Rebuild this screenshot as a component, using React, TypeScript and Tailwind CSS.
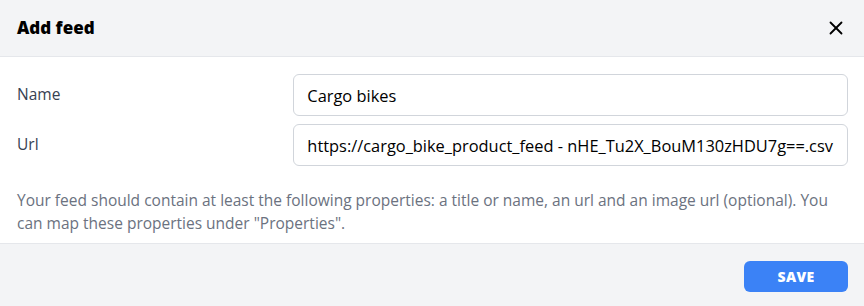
import React from "react";
import { X } from "lucide-react";

const App = () => {
  return (
    <div
      className="w-[864px] h-[306px] bg-white flex flex-col text-[#1f2937]"
      style={{ fontFamily: "'Open Sans', 'Noto Sans', sans-serif" }}
    >
      {/* Header */}
      <div className="h-[57px] bg-[#f3f4f6] border-b border-[#e5e7eb] flex items-center justify-between pl-[17px] pr-[17px]">
        <h2 className="text-[17px] font-extrabold text-black">Add feed</h2>
        <X className="w-[22px] h-[22px] text-black" strokeWidth={2} />
      </div>

      {/* Body */}
      <div className="flex-1 px-4 pt-[17px]">
        <div className="grid grid-cols-3 items-center gap-y-2">
          <label className="pl-px text-[15.5px] text-[#374151]">Name</label>
          <input
            className="col-span-2 h-[42px] rounded-md border border-[#d1d5db] px-[13px] text-[16.4px] text-black outline-none"
            defaultValue="Cargo bikes"
          />
          <label className="pl-px text-[15.5px] text-[#374151]">Url</label>
          <input
            className="col-span-2 h-[42px] rounded-md border border-[#d1d5db] px-[13px] text-[16.4px] text-black outline-none"
            defaultValue="https://cargo_bike_product_feed - nHE_Tu2X_BouM130zHDU7g==.csv"
          />
        </div>
        <p className="mt-[23px] pl-px text-[15.5px] leading-[23px] text-[#6b7280]">
          Your feed should contain at least the following properties: a title or
          name, an url and an image url (optional). You can map these properties
          under "Properties".
        </p>
      </div>

      {/* Footer */}
      <div className="h-[63px] bg-[#f3f4f6] border-t border-[#e5e7eb] flex items-center justify-end px-4 pt-[3px]">
        <button className="w-[104px] h-[31px] rounded-md bg-[#3b82f6] text-white text-[14px] font-extrabold tracking-wide">
          SAVE
        </button>
      </div>
    </div>
  );
};

export default App;
